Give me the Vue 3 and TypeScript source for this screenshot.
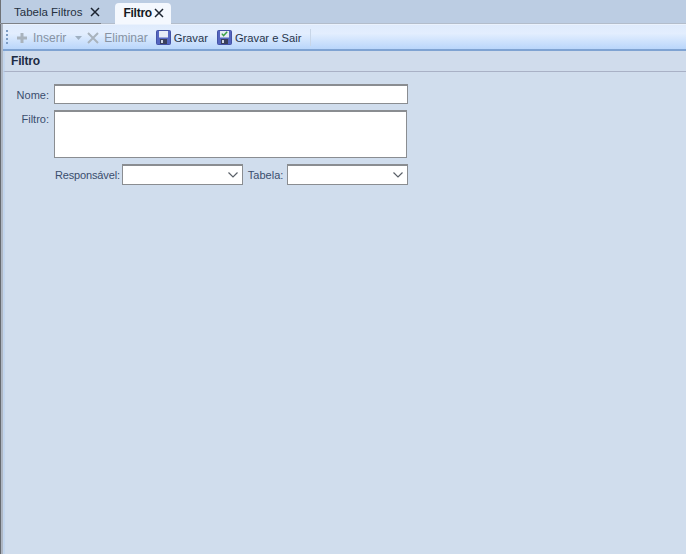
<script setup lang="ts">
const tabs = [
  { label: 'Tabela Filtros', active: false },
  { label: 'Filtro', active: true },
]
</script>

<template>
  <div class="app">
    <div class="tabstrip">
      <div v-for="t in tabs" :key="t.label" class="tab" :class="{ active: t.active }">
        <span class="tab-label">{{ t.label }}</span>
        <svg class="tab-x" width="10" height="10" viewBox="0 0 10 10">
          <path d="M1 1 L9 9 M9 1 L1 9" stroke="#1c2430" stroke-width="1.5" fill="none" />
        </svg>
      </div>
    </div>
    <div class="frame">
      <div class="toolbar">
        <svg class="grip" width="3" height="18" viewBox="0 0 3 18">
          <g fill="#7c9cc4">
            <rect x="0" y="1" width="2" height="2" />
            <rect x="0" y="5" width="2" height="2" />
            <rect x="0" y="9" width="2" height="2" />
            <rect x="0" y="13" width="2" height="2" />
          </g>
        </svg>
        <button class="tool disabled first">
          <svg width="12" height="12" viewBox="0 0 12 12"><path d="M4.5 1h3v3.5H11v3H7.5V11h-3V7.5H1v-3h3.5z" fill="#a9b3bd" /></svg>
          <span>Inserir</span>
        </button>
        <svg class="caret" width="7" height="4" viewBox="0 0 7 4"><path d="M0 0h7L3.5 4z" fill="#9fb0c2" /></svg>
        <button class="tool disabled">
          <svg width="14" height="14" viewBox="0 0 14 14"><path d="M2 2 L12 12 M12 2 L2 12" stroke="#a9b3bd" stroke-width="2" fill="none" /></svg>
          <span>Eliminar</span>
        </button>
        <button class="tool save">
          <svg width="15" height="15" viewBox="0 0 15 15">
            <rect x="0.5" y="0.5" width="14" height="14" rx="1" fill="#5566c0" stroke="#4453a6" />
            <rect x="3" y="1" width="9" height="6.5" fill="#e6ebf6" />
            <rect x="4" y="9" width="7" height="5" fill="#3a3f5c" />
            <rect x="5" y="10" width="2" height="3" fill="#cfd6e6" />
          </svg>
          <span>Gravar</span>
        </button>
        <button class="tool save">
          <svg width="15" height="15" viewBox="0 0 15 15">
            <rect x="0.5" y="0.5" width="14" height="14" rx="1" fill="#5566c0" stroke="#4453a6" />
            <rect x="3" y="1" width="9" height="6.5" fill="#e6ebf6" />
            <path d="M4.8 3.6 L6.6 5.6 L10.2 1.8" stroke="#3aa046" stroke-width="1.4" fill="none" />
            <rect x="4" y="9" width="7" height="5" fill="#3a3f5c" />
            <rect x="5" y="10" width="2" height="3" fill="#cfd6e6" />
          </svg>
          <span>Gravar e Sair</span>
        </button>
        <div class="sep"></div>
      </div>
      <div class="header">Filtro</div>
      <div class="body">
        <div class="row row-nome">
          <label class="lbl">Nome:</label>
          <div class="input name"></div>
        </div>
        <div class="row row-filtro">
          <label class="lbl">Filtro:</label>
          <div class="input area"></div>
        </div>
        <div class="row row-combos">
          <label class="lbl2">Responsável:</label>
          <div class="input combo resp">
            <svg width="10" height="6" viewBox="0 0 10 6"><path d="M0.5 0.5 L5 5 L9.5 0.5" stroke="#5a6068" stroke-width="1.2" fill="none" /></svg>
          </div>
          <label class="lbl2 tabela">Tabela:</label>
          <div class="input combo tab-combo">
            <svg width="10" height="6" viewBox="0 0 10 6"><path d="M0.5 0.5 L5 5 L9.5 0.5" stroke="#5a6068" stroke-width="1.2" fill="none" /></svg>
          </div>
        </div>
      </div>
    </div>
  </div>
</template>

<style>
html, body { margin: 0; padding: 0; }
</style>

<style scoped>
.app {
  width: 686px;
  height: 554px;
  overflow: hidden;
  display: flex;
  flex-direction: column;
  background: #bccde3;
  font-family: "Liberation Sans", Arial, sans-serif;
  font-size: 11px;
  color: #3a4d6e;
}
.tabstrip {
  position: relative;
  height: 24px;
  flex: none;
  display: flex;
  align-items: flex-end;
  padding-left: 13px;
  box-sizing: border-box;
  background: #bccde3;
  border-left: 1px solid #6f7276;
  border-bottom: 1px solid #b3bdcb;
  gap: 15px;
}
.tabstrip::before {
  content: "";
  position: absolute;
  left: 0;
  bottom: -1px;
  width: 100px;
  height: 1px;
  background: #7d8187;
}
.tab {
  height: 23px;
  display: flex;
  align-items: center;
  box-sizing: border-box;
  color: #25303f;
  font-size: 11.5px;
}
.tab-x { margin-left: 8px; }
.tab.active {
  height: 21px;
  margin-bottom: -1px;
  padding: 0 7px 2px 8px;
  background: #f4f8fe;
  border-radius: 4px 4px 0 0;
  font-size: 12px;
  font-weight: 700;
  letter-spacing: -0.25px;
  color: #141a24;
}
.tab.active .tab-x { margin-left: 2px; }
.frame {
  flex: 1;
  display: flex;
  flex-direction: column;
  border-left: 1px solid #666a70;
  padding-left: 2px;
  background: #aeb6c2;
  box-sizing: border-box;
  min-height: 0;
}
.toolbar {
  height: 27px;
  flex: none;
  box-sizing: border-box;
  display: flex;
  align-items: center;
  padding: 1px 0 0 3px;
  background: linear-gradient(#dfebfc 0%, #e3eefe 35%, #b9d6fb 100%);
  border-top: 1px solid #eaf2fd;
  border-bottom: 2px solid #7fa3d2;
  font-size: 12px;
}
.tool {
  display: flex;
  align-items: center;
  gap: 4px;
  border: 0;
  background: none;
  padding: 0;
  margin-left: 8px;
  font: inherit;
  color: #27344a;
}
.tool.first { margin-left: 7px; }
.tool.first svg { margin-right: 1px; }
.tool.disabled { color: #8793a3; }
.tool.save { font-size: 11.2px; gap: 3px; }
.tool.save + .tool.save { margin-left: 9px; }
.caret { margin-left: 9px; }
.tool.disabled + .caret + .tool { margin-left: 4px; }
.sep {
  width: 1px;
  height: 17px;
  margin-left: 9px;
  background: #c8d6e8;
}
.header {
  height: 21px;
  flex: none;
  box-sizing: border-box;
  display: flex;
  align-items: center;
  padding-left: 6px;
  background: #d0dcec;
  border-left: 2px solid #c3d6ee;
  border-bottom: 1px solid #a9b1c6;
  font-weight: 700;
  font-size: 12px;
  letter-spacing: -0.2px;
  color: #1d2b44;
}
.body {
  flex: 1;
  background: #d0dded;
  border-left: 2px solid #c3d6ee;
  padding: 12px 0 0 0;
  display: flex;
  flex-direction: column;
}
.row { display: flex; }
.lbl {
  width: 44px;
  text-align: right;
  margin-right: 5px;
}
.row-nome .lbl { height: 20px; line-height: 22px; }
.input {
  background: #fff;
  border: 1px solid #8a8d91;
  border-top-width: 2px;
  box-sizing: border-box;
}
.name { width: 354px; height: 20px; }
.row-filtro { margin-top: 6px; }
.row-filtro .lbl { line-height: 18px; }
.area { width: 353px; height: 48px; }
.row-combos { margin-top: 6px; padding-left: 50px; align-items: center; }
.lbl2 { margin-right: 2px; font-size: 11px; letter-spacing: -0.15px; }
.combo {
  height: 21px;
  display: flex;
  align-items: center;
  justify-content: flex-end;
  padding-right: 4px;
}
.resp { width: 121px; }
.lbl2.tabela { margin-left: 5px; margin-right: 3px; letter-spacing: 0; width: 36px; }
.tab-combo { width: 121px; }
</style>
